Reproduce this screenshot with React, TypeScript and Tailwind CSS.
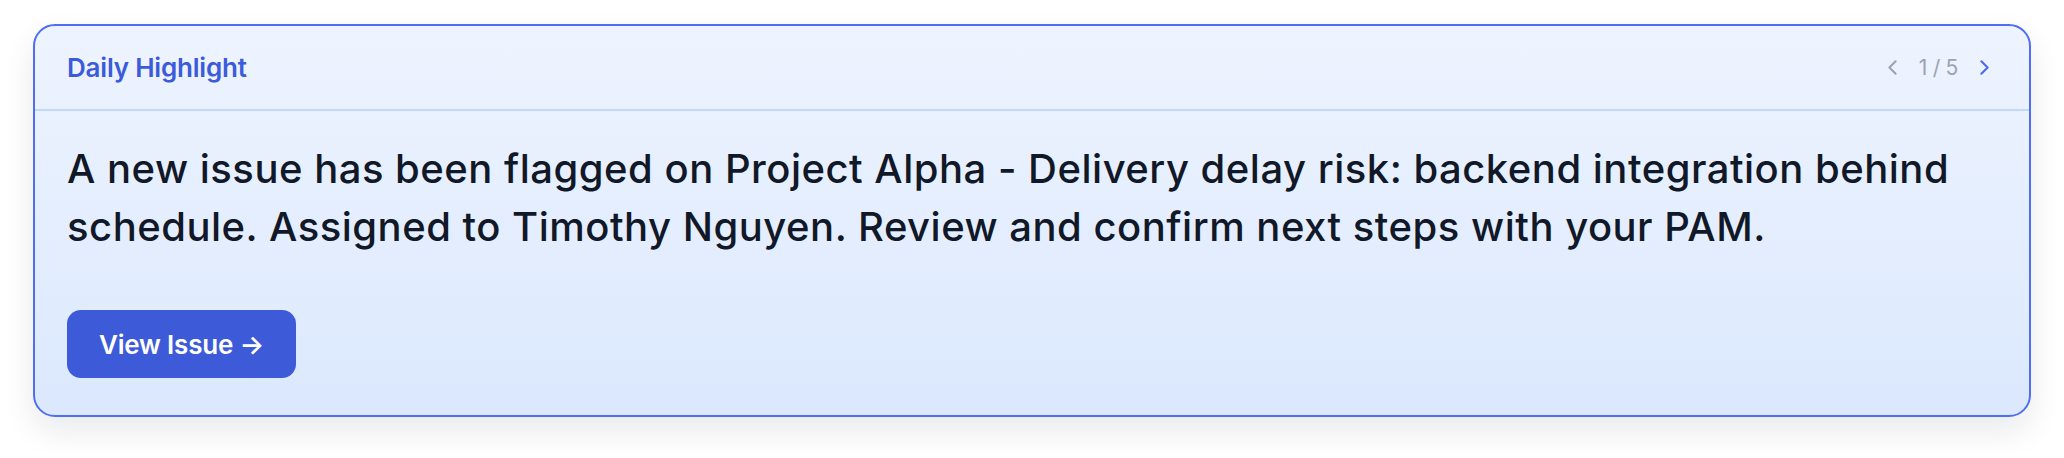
import React, { useState } from 'react';
import { ChevronLeft, ChevronRight } from 'lucide-react';

interface Highlight {
  id: number;
  message: string;
  cta: string;
}

const highlights: Highlight[] = [
  {
    id: 1,
    message:
      'A new issue has been flagged on Project Alpha - Delivery delay risk: backend integration behind schedule. Assigned to Timothy Nguyen. Review and confirm next steps with your PAM.',
    cta: 'View Issue',
  },
];

const TOTAL = 5;

const DailyHighlight: React.FC = () => {
  const [index, setIndex] = useState(0);
  const item = highlights[0];

  return (
    <div className="rounded-[22px] border-2 border-[#4f6ef2] bg-gradient-to-b from-[#eef4ff] to-[#dbe8fd] shadow-[0_14px_32px_rgba(15,23,42,0.09)] overflow-hidden">
      <div className="h-[85px] flex items-center justify-between px-[32px] border-b-2 border-[#bfd8fb]">
        <h3 className="text-[26px] font-semibold text-[#3b5bdb] tracking-[-0.2px]">Daily Highlight</h3>
        <div className="flex items-center gap-[14px]">
          <button
            className="text-[#9ca3af]"
            onClick={() => setIndex(i => Math.max(0, i - 1))}
            aria-label="Previous"
          >
            <ChevronLeft size={25} strokeWidth={2} />
          </button>
          <span className="text-[21px] text-[#9ca3af] tracking-[-0.3px]">{index + 1} / {TOTAL}</span>
          <button
            className="text-[#4a69ef]"
            onClick={() => setIndex(i => Math.min(TOTAL - 1, i + 1))}
            aria-label="Next"
          >
            <ChevronRight size={25} strokeWidth={2} />
          </button>
        </div>
      </div>
      <div className="px-[32px] pt-[29px] pb-[37px]">
        <p className="text-[40px] leading-[58px] font-medium text-[#111827] tracking-[0.5px]">{item.message}</p>
        <button className="mt-[54px] h-[68px] px-[32px] rounded-[14px] bg-[#3d5bd9] text-white text-[26px] font-semibold tracking-[-0.2px]">
          {item.cta} →
        </button>
      </div>
    </div>
  );
};

export default function App() {
  return (
    <div className="w-full min-h-[458px] bg-white px-[33px] pt-[24px] font-['Inter','Liberation_Sans',sans-serif]">
      <DailyHighlight />
    </div>
  );
}
